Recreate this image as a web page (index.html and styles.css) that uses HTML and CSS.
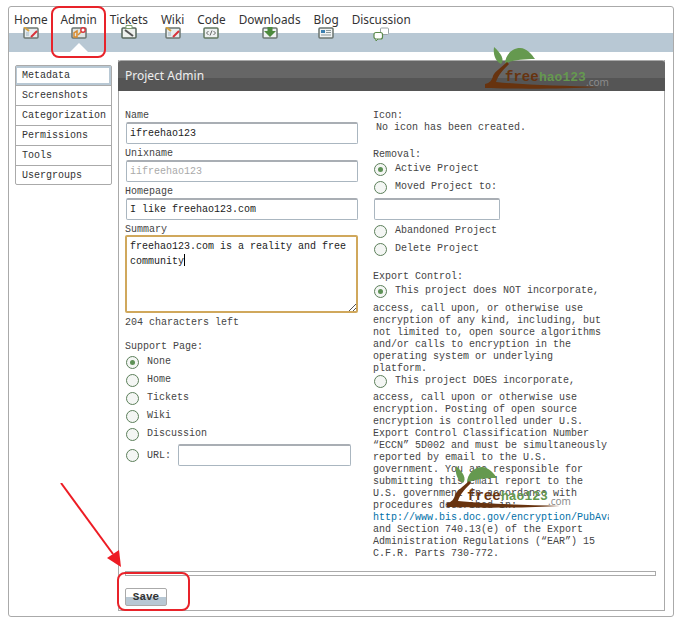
FILE: index.html
```html
<!DOCTYPE html>
<html lang="en">
<head>
    <meta charset="UTF-8">
    <title>Project Admin</title>
    <link rel="stylesheet" href="styles.css">
</head>
<body>
    <svg width="0" height="0" class="defs">
        <symbol id="logo" viewBox="0 0 125 43">
            <path d="M9 0C8 7 10 14 16 17C20 13 16 6 9 0Z" fill="#65994f"/>
            <path d="M20 17C20 8 27 1 35 1C42 1 47 8 50 12C38 12 27 13 20 17Z" fill="#65994f"/>
            <path d="M22 15C16 21 10 24 8 29C7 33 5 36 0 37L0 41C30 42 80 42 113 40C80 39 40 38 11 35C13 28 19 22 24 17Z" fill="#67330f"/>
            <text x="20" y="34" class="logo-free">free</text>
            <text x="54" y="34" class="logo-hao">hao123</text>
            <text x="101" y="39" class="logo-com">.com</text>
        </symbol>
    </svg>
    <div class="page">
        <ul class="nav">
            <li class="tab">Home
                <svg class="ico" viewBox="0 0 16 12"><rect x="1" y="1" width="14" height="10" rx="1" fill="#e6ecee" stroke="#6b7570" stroke-width="1.5"/><path d="M1 0l5 4" stroke="#d8a23c" stroke-width="2"/><path d="M8 10l6-6" stroke="#d8323a" stroke-width="2"/><path d="M3 6h3M3 8h3" stroke="#9fb4c4"/></svg>
            </li>
            <li class="tab current">Admin
                <svg class="ico" viewBox="0 0 16 12"><rect x="1" y="1" width="14" height="10" rx="1" fill="#dfe5e5" stroke="#6b7570" stroke-width="1.5"/><path d="M3 10V6l3-2v6z" fill="none" stroke="#d98a2b" stroke-width="1.5"/><path d="M7 8l4-4" stroke="#d98a2b" stroke-width="1.5"/><circle cx="12" cy="3" r="2.2" fill="#fff" stroke="#d8323a" stroke-width="1.4"/></svg>
            </li>
            <li class="tab">Tickets
                <svg class="ico tall" viewBox="0 0 16 14"><rect x="1" y="3" width="14" height="10" rx="1" fill="#eef1ee" stroke="#56665a" stroke-width="1.5"/><path d="M4 5l8 6" stroke="#555" stroke-width="2"/><path d="M5 .5h6v3H5z" fill="#fff" stroke="#7fa06d"/></svg>
            </li>
            <li class="tab">Wiki
                <svg class="ico" viewBox="0 0 16 12"><rect x="1" y="1" width="14" height="10" rx="1" fill="#e6ecee" stroke="#6b7570" stroke-width="1.5"/><path d="M1 0l5 4" stroke="#d8a23c" stroke-width="2"/><path d="M8 10l6-6" stroke="#d8323a" stroke-width="2"/><path d="M3 6h3M3 8h3" stroke="#9fb4c4"/></svg>
            </li>
            <li class="tab">Code
                <svg class="ico" viewBox="0 0 16 12"><rect x="1" y="1" width="14" height="10" rx="1" fill="#eef1f1" stroke="#62775f" stroke-width="1.5"/><path d="M5.500 4L3.500 6l2 2M10.500 4l2 2-2 2M7 8.500l2-5" fill="none" stroke="#666"/></svg>
            </li>
            <li class="tab">Downloads
                <svg class="ico" viewBox="0 0 16 12"><rect x="1" y="1" width="14" height="10" rx="1" fill="#eef1f1" stroke="#6b7570" stroke-width="1.5"/><path d="M5.500 0h5v4H14l-6 6-6-6h3.500z" fill="#4d8a3d"/></svg>
            </li>
            <li class="tab">Blog
                <svg class="ico" viewBox="0 0 16 12"><rect x="1" y="1" width="14" height="10" rx="1" fill="#f0f3f3" stroke="#6b7570" stroke-width="1.5"/><rect x="3" y="3" width="4" height="3" fill="#3c80b0"/><path d="M8 3.500h5M8 5.500h5M3 8h10" stroke="#8b999b"/></svg>
            </li>
            <li class="tab">Discussion
                <svg class="ico talk" viewBox="0 0 16 14"><rect x="7.500" y="1" width="8" height="6.500" rx="1" fill="#fff" stroke="#9aa4a6"/><rect x="1" y="5.500" width="8.500" height="6.500" rx="2" fill="#fff" stroke="#5b8a4a" stroke-width="1.200"/><path d="M3 12v2l2-2" fill="#fff" stroke="#5b8a4a"/></svg>
            </li>
        </ul>
        <div class="bar"></div>
        <div class="main">
            <ul class="side">
                <li class="active"><span>Metadata</span></li>
                <li>Screenshots</li>
                <li>Categorization</li>
                <li>Permissions</li>
                <li>Tools</li>
                <li>Usergroups</li>
            </ul>
            <div class="panel">
                <h2>Project Admin</h2>
                <form class="form">
                    <div class="cols">
                        <div class="left">
                            <label class="lbl">Name</label>
                            <div class="inp">ifreehao123</div>
                            <label class="lbl">Unixname</label>
                            <div class="inp off">iifreehao123</div>
                            <label class="lbl">Homepage</label>
                            <div class="inp">I like freehao123.com</div>
                            <label class="lbl">Summary</label>
                            <div class="area">freehao123.com is a reality and free community<i class="caret"></i>
                                <svg class="grip" viewBox="0 0 8 8"><path d="M1 8L8 1M5 8l3-3" stroke="#555" fill="none"/></svg>
                            </div>
                            <p class="count">204 characters left</p>
                            <label class="lbl head support">Support Page:</label>
                            <div class="opt"><b class="radio on"></b>None</div>
                            <div class="opt"><b class="radio"></b>Home</div>
                            <div class="opt"><b class="radio"></b>Tickets</div>
                            <div class="opt"><b class="radio"></b>Wiki</div>
                            <div class="opt"><b class="radio"></b>Discussion</div>
                            <div class="opt url"><b class="radio"></b>URL:<div class="inp small"></div></div>
                        </div>
                        <div class="right">
                            <label class="lbl">Icon:</label>
                            <p class="noicon">No icon has been created.</p>
                            <label class="lbl head removal">Removal:</label>
                            <div class="opt"><b class="radio on"></b>Active Project</div>
                            <div class="opt"><b class="radio"></b>Moved Project to:</div>
                            <div class="inp moved"></div>
                            <div class="opt"><b class="radio"></b>Abandoned Project</div>
                            <div class="opt"><b class="radio"></b>Delete Project</div>
                            <label class="lbl head export">Export Control:</label>
                            <div class="opt"><b class="radio on"></b>This project does NOT incorporate,</div>
                            <p class="legal first">access, call upon, or otherwise use<br>encryption of any kind, including, but<br>not limited to, open source algorithms<br>and/or calls to encryption in the<br>operating system or underlying<br>platform.</p>
                            <div class="opt tight"><b class="radio"></b>This project DOES incorporate,</div>
                            <p class="legal">access, call upon or otherwise use<br>encryption. Posting of open source<br>encryption is controlled under U.S.<br>Export Control Classification Number<br>“ECCN” 5D002 and must be simultaneously<br>reported by email to the U.S.<br>government. You are responsible for<br>submitting this email report to the<br>U.S. government in accordance with<br>procedures described in:<br><a class="link">http://www.bis.doc.gov/encryption/PubAvail</a><br>and Section 740.13(e) of the Export<br>Administration Regulations (“EAR”) 15<br>C.F.R. Parts 730-772.</p>
                        </div>
                    </div>
                    <div class="rule"></div>
                    <button class="save" type="button">Save</button>
                </form>
            </div>
        </div>
        <svg class="mark mark-top"><use href="#logo"/></svg>
        <svg class="mark mark-low"><use href="#logo"/></svg>
        <div class="ring ring-admin"></div>
        <div class="ring ring-save"></div>
        <svg class="arrow" width="64" height="88" viewBox="0 0 64 88"><path d="M1 0L53 71" stroke="#ed1c24" stroke-width="2" fill="none"/><path d="M61 84L47 75L59 67Z" fill="#ed1c24"/></svg>
    </div>
</body>
</html>
```

FILE: styles.css
```css
html, body, ul, p, h2 {
    margin: 0;
    padding: 0;
}
body {
    width: 675px;
    height: 618px;
    overflow: hidden;
    background: #fff;
    color: #444;
    font-family: "Liberation Mono", monospace;
    font-size: 10px;
}
ul {
    list-style: none;
}
.defs {
    position: absolute;
}
.page {
    position: relative;
    box-sizing: border-box;
    width: 666px;
    height: 611px;
    margin: 6px 0 0 8px;
    border: 1px solid #aaa;
    border-radius: 3px;
}
.nav {
    display: flex;
    box-sizing: border-box;
    height: 26px;
    padding: 5px 0 0 5px;
    gap: 13px;
    font-family: "Noto Sans", sans-serif;
    font-size: 11.8px;
    line-height: 14px;
}
.tab {
    position: relative;
    z-index: 1;
    display: flex;
    flex-direction: column;
    align-items: center;
    color: #333;
}
.current::after {
    content: "";
    position: absolute;
    top: 31px;
    left: 50%;
    margin-left: -9px;
    border-left: 9px solid transparent;
    border-right: 9px solid transparent;
    border-bottom: 9px solid #fff;
}
.ico {
    flex: none;
    width: 16px;
    height: 12px;
    margin-top: 1px;
}
.tall {
    height: 14px;
    margin-top: -1px;
}
.talk {
    height: 14px;
}
.bar {
    height: 19px;
    background: #b8c8d4;
}
.main {
    display: flex;
    padding: 8px 0 0 6px;
}
.side {
    box-sizing: border-box;
    width: 97px;
    height: 120px;
    margin-top: 5px;
    border: 1px solid #aaa;
    border-radius: 2px;
    color: #333;
}
.side li {
    box-sizing: border-box;
    height: 20px;
    padding-left: 6px;
    border-bottom: 1px solid #aaa;
    line-height: 19px;
}
.side li:last-child {
    border-bottom: 0;
}
.side .active {
    padding: 2px 2px 2px 1px;
    background: #b8c8d4;
    line-height: 15px;
}
.active span {
    display: block;
    height: 15px;
    padding-left: 5px;
    background: #fff;
}
.panel {
    box-sizing: border-box;
    width: 547px;
    height: 551px;
    margin-left: 6px;
    border: 1px solid #aaa;
    border-top: 0;
}
.panel h2 {
    box-sizing: border-box;
    height: 31px;
    margin: 0 -1px;
    padding-left: 7px;
    background: linear-gradient(#666 0, #666 55%, #555 55%, #555 100%);
    border-top: 1px solid #aaa;
    border-radius: 3px 3px 0 0;
    color: #eee;
    font-family: "Noto Sans", sans-serif;
    font-size: 12px;
    font-weight: 400;
    line-height: 30px;
}
.form {
    padding-left: 6px;
}
.cols {
    display: flex;
    box-sizing: border-box;
    height: 480px;
    padding-top: 19px;
}
.left {
    width: 248px;
}
.right {
    width: 242px;
}
.lbl {
    display: block;
    height: 12px;
    line-height: 12px;
}
.inp {
    box-sizing: border-box;
    width: 232px;
    height: 22px;
    margin: 0 0 4px 1px;
    padding-left: 3px;
    border: 1px solid #aab6c0;
    border-top: 2px solid #a9aeb4;
    border-radius: 2px;
    color: #222;
    line-height: 19px;
}
.off {
    color: #aaa;
}
.area {
    position: relative;
    box-sizing: border-box;
    width: 233px;
    height: 78px;
    margin-top: -1px;
    padding: 3px;
    border: 2px solid #d0a85c;
    border-radius: 2px;
    color: #222;
    line-height: 14px;
}
.caret {
    display: inline-block;
    width: 1px;
    height: 12px;
    background: #000;
    vertical-align: -2px;
}
.grip {
    position: absolute;
    right: 0;
    bottom: 0;
    width: 8px;
    height: 8px;
}
.count {
    margin-top: 4px;
    line-height: 12px;
}
.head {
    margin-bottom: -2px;
}
.support {
    margin-top: 12px;
    margin-bottom: -1px;
}
.removal {
    margin-top: 15px;
}
.export {
    margin-top: 14px;
}
.opt {
    display: flex;
    align-items: center;
    height: 18px;
}
.radio {
    position: relative;
    flex: none;
    box-sizing: border-box;
    width: 13px;
    height: 13px;
    margin: 2px 8px 0 1px;
    border: 1px solid #5c7f5a;
    border-radius: 50%;
    background: #f4f6f4;
}
.on::after {
    content: "";
    position: absolute;
    left: 3px;
    top: 3px;
    width: 5px;
    height: 5px;
    border-radius: 50%;
    background: #5e9156;
}
.url {
    height: 26px;
}
.url .radio {
    margin-top: 0;
}
.small {
    width: 173px;
    margin: 0 0 0 7px;
}
.noicon {
    margin-left: 3px;
    line-height: 12px;
}
.moved {
    width: 126px;
    margin: 3px 0 1px 1px;
}
.legal {
    margin-top: 3px;
    line-height: 12px;
}
.first {
    margin-top: 4px;
}
.tight {
    margin-top: -4px;
}
.link {
    display: inline-block;
    width: 236px;
    overflow: hidden;
    color: #0070a8;
    vertical-align: top;
    white-space: nowrap;
}
.rule {
    box-sizing: border-box;
    width: 531px;
    height: 5px;
    margin-bottom: 12px;
    border: 1px solid #aaa;
}
.save {
    display: block;
    width: 42px;
    height: 18px;
    padding: 0;
    border: 1px solid #aaa;
    border-radius: 2px;
    background: linear-gradient(#fff 0, #fff 53%, #b8c8d4 53%, #b8c8d4 100%);
    color: #333;
    font-family: "Liberation Mono", monospace;
    font-size: 11px;
    font-weight: 700;
}
.mark {
    position: absolute;
    width: 125px;
    height: 43px;
}
.mark-top {
    left: 476px;
    top: 40px;
}
.mark-low {
    left: 438px;
    top: 459px;
}
.logo-free {
    fill: #67330f;
    font-family: "Liberation Mono", monospace;
    font-size: 14px;
    font-weight: 700;
}
.logo-hao {
    fill: #65994f;
    font-family: "Liberation Mono", monospace;
    font-size: 13px;
    font-weight: 700;
}
.logo-com {
    fill: #8c8c8c;
    font-family: "Noto Sans", sans-serif;
    font-size: 10px;
}
.ring {
    position: absolute;
    box-sizing: border-box;
    border: 2px solid #e8232a;
    border-radius: 8px;
}
.ring-admin {
    left: 42px;
    top: -1px;
    width: 55px;
    height: 52px;
}
.ring-save {
    left: 108px;
    top: 565px;
    width: 73px;
    height: 39px;
}
.arrow {
    position: absolute;
    left: 51px;
    top: 476px;
}
```
